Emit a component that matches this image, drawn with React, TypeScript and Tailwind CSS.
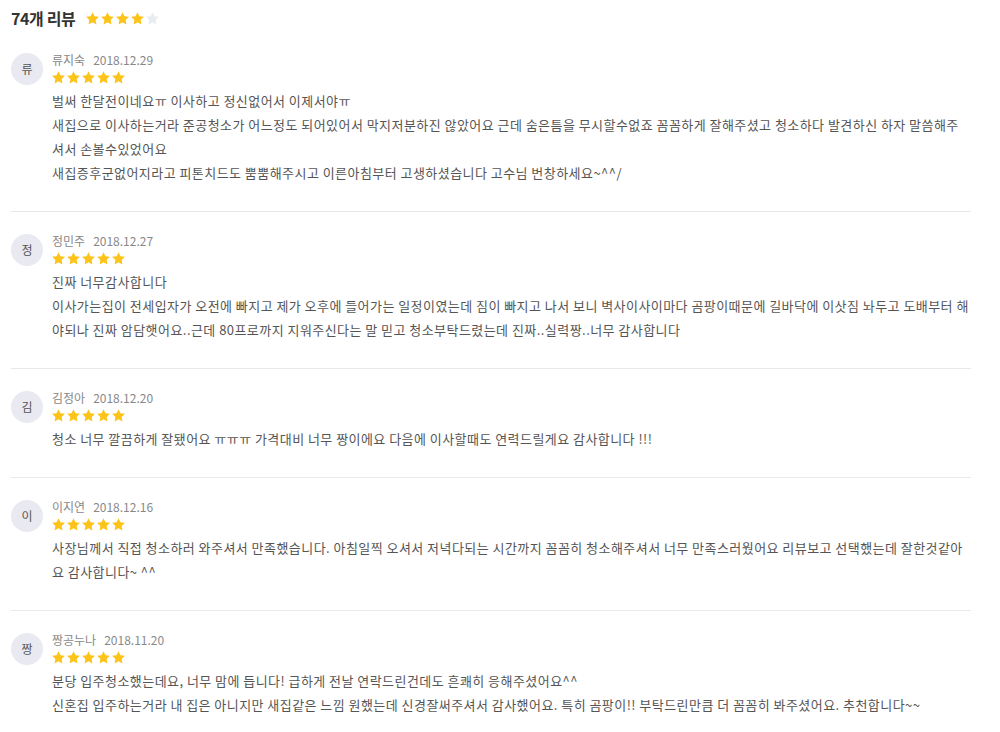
import React from "react";

const reviews = [
  {
    name: "류지숙",
    date: "2018.12.29",
    lines: [
      "벌써 한달전이네요ㅠ 이사하고 정신없어서 이제서야ㅠ",
      "새집으로 이사하는거라 준공청소가 어느정도 되어있어서 막지저분하진 않았어요 근데 숨은틈을 무시할수없죠 꼼꼼하게 잘해주셨고 청소하다 발견하신 하자 말씀해주셔서 손볼수있었어요",
      "새집증후군없어지라고 피톤치드도 뿜뿜해주시고 이른아침부터 고생하셨습니다 고수님 번창하세요~^^/",
    ],
  },
  {
    name: "정민주",
    date: "2018.12.27",
    lines: [
      "진짜 너무감사합니다",
      "이사가는집이 전세입자가 오전에 빠지고 제가 오후에 들어가는 일정이였는데 짐이 빠지고 나서 보니 벽사이사이마다 곰팡이때문에 길바닥에 이삿짐 놔두고 도배부터 해야되나 진짜 암담햇어요..근데 80프로까지 지워주신다는 말 믿고 청소부탁드렸는데 진짜..실력짱..너무 감사합니다",
    ],
  },
  {
    name: "김정아",
    date: "2018.12.20",
    lines: ["청소 너무 깔끔하게 잘됐어요 ㅠㅠㅠ 가격대비 너무 짱이에요 다음에 이사할때도 연력드릴게요 감사합니다 !!!"],
  },
  {
    name: "이지연",
    date: "2018.12.16",
    lines: [
      "사장님께서 직접 청소하러 와주셔서 만족했습니다. 아침일찍 오셔서 저녁다되는 시간까지 꼼꼼히 청소해주셔서 너무 만족스러웠어요 리뷰보고 선택했는데 잘한것같아요 감사합니다~ ^^",
    ],
  },
  {
    name: "짱공누나",
    date: "2018.11.20",
    lines: [
      "분당 입주청소했는데요, 너무 맘에 듭니다! 급하게 전날 연락드린건데도 흔쾌히 응해주셨어요^^",
      "신혼집 입주하는거라 내 집은 아니지만 새집같은 느낌 원했는데 신경잘써주셔서 감사했어요. 특히 곰팡이!! 부탁드린만큼 더 꼼꼼히 봐주셨어요. 추천합니다~~",
    ],
  },
];

function Star({ filled }: { filled: boolean }) {
  return (
    <svg viewBox="0 0 24 24" className="w-[15px] h-[15px]">
      <path
        d="M12 1.8l3.1 6.6 7.1.9-5.2 5 1.3 7.1L12 18l-6.3 3.4L7 14.3l-5.2-5 7.1-.9z"
        fill={filled ? "#fcc419" : "#e9ecef"}
      />
    </svg>
  );
}

function Stars({ count }: { count: number }) {
  return (
    <div className="flex">
      {[0, 1, 2, 3, 4].map((i) => (
        <Star key={i} filled={i < count} />
      ))}
    </div>
  );
}

export default function App() {
  return (
    <div
      className="w-[1000px] min-h-[732px] bg-white pl-[11px] pr-[29px] pt-[5px]"
      style={{ fontFamily: '"Noto Sans CJK KR", "Noto Sans", sans-serif' }}
    >
      <div className="flex items-center h-[26px]">
        <h2 className="text-[16px] font-bold text-[#333] tracking-[-0.4px]">74개 리뷰</h2>
        <div className="ml-[10px]">
          <Stars count={4} />
        </div>
      </div>

      <ul>
        {reviews.map((r, idx) => (
          <li
            key={r.name}
            className={`flex gap-[9px] pt-[21px] pb-[26px] ${idx > 0 ? "border-t border-[#e9e9e9]" : ""}`}
          >
            <div className="w-8 h-8 shrink-0 mt-[1px] rounded-full bg-[#e9e9f1] flex items-center justify-center text-[12px] text-[#555]">
              {r.name[0]}
            </div>
            <div className="flex-1">
              <div className="flex items-center gap-[8px] h-[16px] text-[12px] text-[#888]">
                <span>{r.name}</span>
                <span>{r.date}</span>
              </div>
              <div className="mt-[2px] -ml-[1px]">
                <Stars count={5} />
              </div>
              <div className="mt-[4px] text-[13px] leading-[24px] text-[#555] tracking-[0.45px]">
                {r.lines.map((l, i) => (
                  <p key={i}>{l}</p>
                ))}
              </div>
            </div>
          </li>
        ))}
      </ul>
    </div>
  );
}
